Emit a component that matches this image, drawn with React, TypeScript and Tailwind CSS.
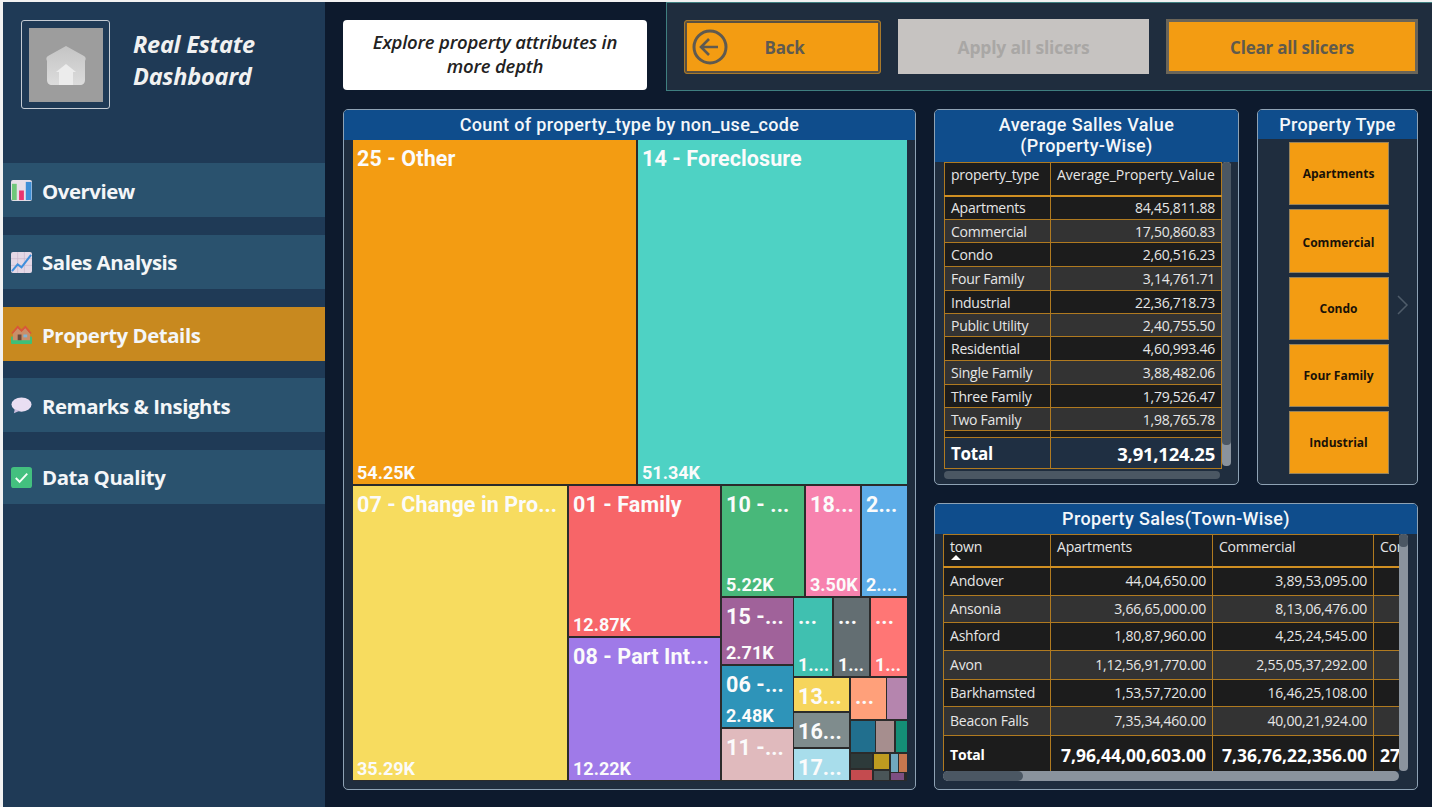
import type { ReactNode } from "react";

const UI = "font-['Open_Sans','Noto_Sans',sans-serif]";
const TITLE = "font-['Roboto','Noto_Sans',sans-serif]";

function ChartEmoji() {
  return (
    <svg viewBox="0 0 22 22" className="h-[21px] w-[21px]">
      <rect width="22" height="22" rx="2" fill="#e6dfe8" />
      <rect x="1" y="4" width="5" height="17" fill="#6fc77a" />
      <rect x="8.5" y="11" width="5" height="10" fill="#e8336f" />
      <rect x="15.5" y="2" width="6" height="19" fill="#3d8fd6" />
    </svg>
  );
}

function TrendEmoji() {
  return (
    <svg viewBox="0 0 22 22" className="h-[21px] w-[21px]">
      <rect width="22" height="22" rx="2" fill="#e4d8e6" />
      <path d="M7 0v22M14 0v22M0 7h22M0 14h22" stroke="#c9b6cc" strokeWidth="0.7" />
      <path d="M1 20l6-7 4 3 10-13" fill="none" stroke="#3f8fdc" strokeWidth="2.2" />
    </svg>
  );
}

function HouseEmoji() {
  return (
    <svg viewBox="0 0 22 22" className="h-[21px] w-[21px]">
      <rect x="0" y="13" width="22" height="8" rx="1" fill="#3fbf78" />
      <path d="M2 10l5-6 4 4 4-4 5 6v7H2z" fill="#c98f6a" />
      <path d="M1 10l6-7 4 4 4-4 6 7" fill="none" stroke="#d9553a" strokeWidth="1.8" />
      <rect x="7" y="11" width="4" height="6" fill="#6b4a3a" />
      <rect x="13" y="11" width="4" height="3" fill="#7fb6d6" />
    </svg>
  );
}

function BubbleEmoji() {
  return (
    <svg viewBox="0 0 22 22" className="h-[21px] w-[21px]">
      <ellipse cx="11" cy="10" rx="10.500" ry="7.500" fill="#e9def2" />
      <path d="M4 15l-1 4 6-2.500z" fill="#cdbfe0" />
    </svg>
  );
}

function CheckEmoji() {
  return (
    <svg viewBox="0 0 22 22" className="h-[21px] w-[21px]">
      <rect width="22" height="22" rx="3" fill="#43c07f" />
      <path d="M5 11.500l4 4 8-8.500" fill="none" stroke="#f4fff8" strokeWidth="2" />
    </svg>
  );
}

function LogoHouse() {
  return (
    <svg viewBox="0 0 74 74" className="h-[74px] w-[74px]">
      <defs>
        <linearGradient id="roof" x1="0" y1="0" x2="0" y2="1">
          <stop offset="0" stopColor="#c4c4c4" />
          <stop offset="1" stopColor="#dcdcdc" />
        </linearGradient>
      </defs>
      <rect width="74" height="74" fill="#9d9d9d" />
      <path
        d="M37 18l18 10c2 1 2 3 1 5v19c0 3-2 5-5 5H23c-3 0-5-2-5-5V33c-1-2-1-4 1-5z"
        fill="url(#roof)"
      />
      <path d="M37 36l10 8h-3v13H30V44h-3z" fill="#ececec" />
    </svg>
  );
}

const NAV = [
  { label: "Overview", icon: <ChartEmoji />, top: "mt-[54px]", pad: "pt-[3px]" },
  { label: "Sales Analysis", icon: <TrendEmoji />, top: "mt-[18px]", pad: "pt-[1px]" },
  { label: "Property Details", icon: <HouseEmoji />, top: "mt-[18px]", pad: "pt-[3px]", active: true },
  { label: "Remarks & Insights", icon: <BubbleEmoji />, top: "mt-[17px]", pad: "pt-[3px]" },
  { label: "Data Quality", icon: <CheckEmoji />, top: "mt-[18px]", pad: "pt-[1px]" },
];

function Sidebar() {
  return (
    <aside className="flex h-full w-[322px] shrink-0 flex-col bg-[#1f3a56]">
      <div className="flex h-[107px] items-start pl-[18px] pt-[18px]">
        <div className="flex h-[89px] w-[89px] shrink-0 items-center justify-center rounded-[3px] border border-[#c5ccd4]">
          <LogoHouse />
        </div>
        <div
          className={`${UI} ml-[23px] mt-[8px] text-[23.500px] font-bold italic leading-[32px] tracking-[-0.25px] text-[#f1f1f1]`}
        >
          Real Estate
          <br />
          Dashboard
        </div>
      </div>
      {NAV.map((item) => (
        <div
          key={item.label}
          className={`${item.top} flex h-[54px] items-center pl-[8px] ${
            item.active ? "bg-[#c8891f]" : "bg-[#2a526e]"
          }`}
        >
          {item.icon}
          <span className={`${UI} ${item.pad} ml-[10px] text-[20.400px] font-bold tracking-[-0.45px] text-[#f4f6f8]`}>
            {item.label}
          </span>
        </div>
      ))}
    </aside>
  );
}

function Panel({
  title,
  headerClass,
  className,
  children,
}: {
  title: ReactNode;
  headerClass: string;
  className: string;
  children: ReactNode;
}) {
  return (
    <section
      className={`${className} flex flex-col overflow-hidden rounded-[5px] border border-[#8ea2b4] bg-[#1f2d3e]`}
    >
      <h2
        className={`${TITLE} ${headerClass} shrink-0 bg-[#0f4d8c] text-center text-[18px] font-medium tracking-[0.35px] text-[#f4f7fa]`}
      >
        {title}
      </h2>
      {children}
    </section>
  );
}

function Cell({
  className,
  label,
  value,
}: {
  className: string;
  label?: string;
  value?: string;
}) {
  return (
    <div
      className={`${className} ${TITLE} flex flex-col justify-between overflow-hidden whitespace-nowrap pl-[4px] font-bold text-[#fbfbfb]`}
    >
      <span className="mt-[7px] text-[21.500px] leading-[24px] tracking-[0.1px]">{label}</span>
      {value && <span className="mb-[2px] text-[18px] leading-[18px]">{value}</span>}
    </div>
  );
}

function Treemap() {
  return (
    <div className="ml-[9px] flex h-[641px] w-[554px] flex-col gap-[2px] border-b border-[#2b2b2b] bg-[#2b2b2b]">
      <div className="flex h-[344px] gap-[2px]">
        <Cell className="w-[283px] bg-[#f39c12]" label="25 - Other" value="54.25K" />
        <Cell className="w-[269px] bg-[#4ed2c4]" label="14 - Foreclosure" value="51.34K" />
      </div>
      <div className="flex h-[294px] gap-[2px]">
        <Cell className="w-[214px] bg-[#f7dc5f]" label="07 - Change in Pro..." value="35.29K" />
        <div className="flex w-[151px] flex-col gap-[2px]">
          <Cell className="h-[150px] bg-[#f76568]" label="01 - Family" value="12.87K" />
          <Cell className="h-[142px] bg-[#9f7ae8]" label="08 - Part Int..." value="12.22K" />
        </div>
        <div className="flex w-[185px] flex-col gap-[2px]">
          <div className="flex h-[110px] gap-[2px]">
            <Cell className="w-[82px] bg-[#48b87a]" label="10 - ..." value="5.22K" />
            <Cell className="w-[54px] bg-[#f782ae]" label="18..." value="3.50K" />
            <Cell className="w-[45px] bg-[#5dade8]" label="2..." value="2...." />
          </div>
          <div className="flex h-[182px] gap-px">
            <div className="flex w-[71px] flex-col gap-[2px]">
              <Cell className="h-[66px] bg-[#a0629a]" label="15 -..." value="2.71K" />
              <Cell className="h-[61px] bg-[#2e94b9]" label="06 -..." value="2.48K" />
              <Cell className="h-[51px] bg-[#e0babd]" label="11 -..." />
            </div>
            <div className="flex w-[113px] flex-col gap-[2px]">
              <div className="flex h-[78px] gap-[2px]">
                <Cell className="w-[38px] bg-[#40c0b0]" label="..." value="1...." />
                <Cell className="w-[35px] bg-[#636e72]" label="..." value="1..." />
                <Cell className="w-[36px] bg-[#ff7675]" label="..." value="1..." />
              </div>
              <div className="flex h-[102px] gap-[2px]">
                <div className="flex w-[55px] flex-col gap-[2px]">
                  <Cell className="h-[33px] bg-[#f6d55c]" label="13..." />
                  <Cell className="h-[34px] bg-[#7f8c8d]" label="16..." />
                  <Cell className="h-[31px] bg-[#a8ddeb]" label="17..." />
                </div>
                <div className="flex w-[56px] flex-col gap-[2px]">
                  <div className="flex h-[41px] gap-px">
                    <Cell className="w-[35px] bg-[#ffa07a]" label="..." />
                    <div className="w-[20px] bg-[#b585ae]" />
                  </div>
                  <div className="flex h-[31px]">
                    <div className="w-[24px] bg-[#216f8e]" />
                    <div className="ml-px w-[18px] bg-[#a68e8e]" />
                    <div className="ml-[2px] w-[11px] bg-[#148f77]" />
                  </div>
                  <div className="flex h-[26px] gap-[2px]">
                    <div className="flex w-[21px] flex-col gap-[2px]">
                      <div className="h-[14px] bg-[#2d3a3a]" />
                      <div className="h-[10px] bg-[#c44b4f]" />
                    </div>
                    <div className="flex w-[15px] flex-col gap-[2px]">
                      <div className="h-[15px] bg-[#bf9b20]" />
                      <div className="h-[9px] bg-[#4a5558]" />
                    </div>
                    <div className="flex w-[16px] flex-col gap-px">
                      <div className="flex h-[18px] gap-px">
                        <div className="w-[7px] bg-[#70a8be]" />
                        <div className="w-[8px] bg-[#c7774e]" />
                      </div>
                      <div className="h-[7px] w-[13px] bg-[#7d4f82]" />
                    </div>
                  </div>
                </div>
              </div>
            </div>
          </div>
        </div>
      </div>
    </div>
  );
}

const AVG_ROWS: [string, string, number][] = [
  ["Apartments", "84,45,811.88", 24],
  ["Commercial", "17,50,860.83", 23],
  ["Condo", "2,60,516.23", 24],
  ["Four Family", "3,14,761.71", 24],
  ["Industrial", "22,36,718.73", 23],
  ["Public Utility", "2,40,755.50", 23],
  ["Residential", "4,60,993.46", 24],
  ["Single Family", "3,88,482.06", 24],
  ["Three Family", "1,79,526.47", 23],
  ["Two Family", "1,98,765.78", 23],
];

const TOWN_ROWS: [string, string, string, number][] = [
  ["Andover", "44,04,650.00", "3,89,53,095.00", 29],
  ["Ansonia", "3,66,65,000.00", "8,13,06,476.00", 27],
  ["Ashford", "1,80,87,960.00", "4,25,24,545.00", 28],
  ["Avon", "1,12,56,91,770.00", "2,55,05,37,292.00", 29],
  ["Barkhamsted", "1,53,57,720.00", "16,46,25,108.00", 27],
  ["Beacon Falls", "7,35,34,460.00", "40,00,21,924.00", 29],
];

const cellBorder = "border border-[#b07a20]";
const headCell = `${cellBorder} border-b-2 border-b-[#d08f22] px-[6px] text-left font-normal`;
const stripe = (i: number) => (i % 2 === 0 ? "bg-[#1c1c1c]" : "bg-[#333333]");

function AverageTable() {
  return (
    <div className="ml-[9px] flex flex-col">
      <div className="flex">
        <table className={`${UI} w-[277px] table-fixed border-collapse text-[14px] tracking-[-0.25px] text-[#e6e6e6]`}>
          <colgroup>
            <col className="w-[106px]" />
            <col className="w-[171px]" />
          </colgroup>
          <thead>
            <tr className="h-[33px] bg-[#1c1c1c]">
              <th className={`${headCell} pb-[8px]`}>property_type</th>
              <th className={`${headCell} pb-[8px] tracking-[0]`}>Average_Property_Value</th>
            </tr>
          </thead>
          <tbody>
            {AVG_ROWS.map(([name, value, h], i) => (
              <tr key={name} className={stripe(i)} style={{ height: h }}>
                <td className={`${cellBorder} px-[6px] py-0`}>{name}</td>
                <td className={`${cellBorder} px-[6px] py-0 text-right`}>{value}</td>
              </tr>
            ))}
            <tr className="h-[7px] bg-[#1c1c1c]">
              <td className={cellBorder} />
              <td className={cellBorder} />
            </tr>
            <tr className="h-[29px] bg-[#1f2f42] text-[18.500px] font-bold text-white">
              <td className={`${cellBorder} px-[6px] py-0 pt-[2px] text-[17px]`}>Total</td>
              <td className={`${cellBorder} px-[6px] py-0 pt-[2px] text-right`}>3,91,124.25</td>
            </tr>
          </tbody>
        </table>
        <div className="flex h-[304px] w-[9px] flex-col overflow-hidden rounded-[4px] bg-[#8a939d]">
          <div className="h-[283px] rounded-[4px] bg-[#4b5763]" />
        </div>
      </div>
      <div className="mt-[2px] h-[8px] w-[276px] rounded-[4px] bg-[#4b5763]" />
    </div>
  );
}

function TownTable() {
  return (
    <div className="ml-[8px] flex flex-col">
      <div className="flex">
        <div className="h-[237px] w-[456px] overflow-hidden">
          <table className={`${UI} w-[550px] table-fixed border-collapse text-[14px] tracking-[-0.2px] text-[#e6e6e6]`}>
            <colgroup>
              <col className="w-[107px]" />
              <col className="w-[162px]" />
              <col className="w-[161px]" />
              <col className="w-[120px]" />
            </colgroup>
            <thead>
              <tr className="h-[32px] bg-[#1c1c1c]">
                <th className={`${headCell} pt-[3px] align-top leading-[17px]`}>
                  town
                  <div className="ml-[1px] h-0 w-0 border-x-[5px] border-b-[5px] border-x-transparent border-b-white" />
                </th>
                <th className={`${headCell} pt-[3px] align-top leading-[17px]`}>Apartments</th>
                <th className={`${headCell} pt-[3px] align-top leading-[17px]`}>Commercial</th>
                <th className={`${headCell} pt-[3px] align-top leading-[17px]`}>Condo</th>
              </tr>
            </thead>
            <tbody>
              {TOWN_ROWS.map(([town, apartments, commercial, h], i) => (
                <tr key={town} className={stripe(i)} style={{ height: h }}>
                  <td className={`${cellBorder} px-[6px] pb-[2px]`}>{town}</td>
                  <td className={`${cellBorder} px-[6px] pb-[2px] text-right`}>{apartments}</td>
                  <td className={`${cellBorder} px-[6px] pb-[2px] text-right`}>{commercial}</td>
                  <td className={cellBorder} />
                </tr>
              ))}
              <tr className="h-[37px] bg-[#1c1c1c] font-bold text-white">
                <td className={`${cellBorder} px-[6px] py-0 text-[14px]`}>Total</td>
                <td className={`${cellBorder} whitespace-nowrap px-[6px] py-0 pt-[3px] text-right text-[17.500px] tracking-[0]`}>
                  7,96,44,00,603.00
                </td>
                <td className={`${cellBorder} whitespace-nowrap px-[6px] py-0 pt-[3px] text-right text-[17.500px] tracking-[0]`}>
                  7,36,76,22,356.00
                </td>
                <td className={`${cellBorder} whitespace-nowrap px-[6px] py-0 pt-[3px] text-left text-[17.500px] tracking-[0]`}>
                  27
                </td>
              </tr>
            </tbody>
          </table>
        </div>
        <div className="h-[237px] w-[9px] overflow-hidden rounded-[4px] bg-[#8a939d]">
          <div className="h-[13px] rounded-[4px] bg-[#4b5763]" />
        </div>
      </div>
      <div className="h-[10px] w-[456px] overflow-hidden rounded-[5px] bg-[#8a939d]">
        <div className="h-full w-[80px] rounded-[5px] bg-[#4b5763]" />
      </div>
    </div>
  );
}

const SLICERS = [
  { label: "Apartments", h: "h-[63px]", pad: "pt-[1px]" },
  { label: "Commercial", h: "h-[64px]", pad: "pt-[3px]" },
  { label: "Condo", h: "h-[63px]", pad: "pt-[1px]" },
  { label: "Four Family", h: "h-[63px]", pad: "pt-[1px]" },
  { label: "Industrial", h: "h-[63px]", pad: "pt-[1px]" },
];

function Toolbar() {
  return (
    <div className="ml-[19px] flex h-[89px] flex-1 items-start border border-r-0 border-[#3f7f80] bg-[#1f2d3e] pl-[17px] pt-[16px]">
      <button
        type="button"
        className={`${UI} relative mt-px flex h-[54px] w-[197px] items-center justify-center rounded-[3px] border border-[#a8792a] bg-[#f39c12] pl-[4px] pt-[2px] text-[17px] font-bold tracking-[-0.2px] text-[#5f5a50] outline-2 -outline-offset-3 outline-[#5a5040]`}
      >
        <svg viewBox="0 0 36 36" className="absolute left-[7px] top-[8px] h-[36px] w-[36px]">
          <circle cx="18" cy="18" r="16" fill="none" stroke="#5f5a50" strokeWidth="3" />
          <path d="M26 18H9M17 10l-8 8 8 8" fill="none" stroke="#5f5a50" strokeWidth="2.600" />
        </svg>
        Back
      </button>
      <button
        type="button"
        className={`${UI} ml-[17px] flex h-[55px] w-[251px] items-center justify-center bg-[#c6c3c1] pt-[2px] text-[17.500px] font-bold tracking-[-0.2px] text-[#a9a7a5]`}
      >
        Apply all slicers
      </button>
      <button
        type="button"
        className={`${UI} ml-[17px] flex h-[55px] w-[252px] items-center justify-center border-[3px] border-[#6b6558] bg-[#f39c12] pt-[2px] text-[17px] font-bold tracking-[-0.2px] text-[#5f5a4c]`}
      >
        Clear all slicers
      </button>
    </div>
  );
}

export default function App() {
  return (
    <div className="h-[807px] w-[1432px] overflow-hidden border-l-[3px] border-t-2 border-[#f2f2f2] bg-[#0d1a2d]">
      <div className="flex h-full">
        <Sidebar />
        <main className="flex min-w-0 flex-1 flex-col">
          <div className="flex items-start">
            <div
              className={`${UI} ml-[18px] mt-[18px] flex h-[70px] w-[304px] items-center justify-center rounded-[4px] bg-white pb-[2px] text-center text-[18.500px] font-semibold italic leading-[24px] tracking-[-0.2px] text-[#222]`}
            >
              Explore property attributes in
              <br />
              more depth
            </div>
            <Toolbar />
          </div>
          <div className="ml-[18px] mt-[18px] flex gap-[18px]">
            <Panel title="Count of property_type by non_use_code" headerClass="h-[30px] leading-[29px]" className="h-[681px] w-[573px]">
              <Treemap />
            </Panel>
            <div className="flex w-[484px] flex-col gap-[18px]">
              <div className="flex gap-[18px]">
                <Panel
                  title={
                    <>
                      Average Salles Value
                      <br />
                      (Property-Wise)
                    </>
                  }
                  headerClass="h-[52px] pt-[4px] leading-[21px]"
                  className="h-[376px] w-[305px]"
                >
                  <AverageTable />
                </Panel>
                <Panel title="Property Type" headerClass="h-[29px] leading-[29px]" className="h-[376px] w-[161px]">
                  <div className="relative flex flex-col items-center gap-[4px] pl-[2px] pt-[3px]">
                    {SLICERS.map((s) => (
                      <div
                        key={s.label}
                        className={`${s.h} ${s.pad} ${UI} flex w-[100px] items-center justify-center border-[1.500px] border-[#97835c] bg-[#f39c12] text-[12px] font-bold text-[#1a1208]`}
                      >
                        {s.label}
                      </div>
                    ))}
                    <svg viewBox="0 0 12 20" className="absolute left-[139px] top-[156px] h-[20px] w-[12px]">
                      <path d="M1 1l9 9-9 9" fill="none" stroke="#4f5c6a" strokeWidth="1.500" />
                    </svg>
                  </div>
                </Panel>
              </div>
              <Panel title="Property Sales(Town-Wise)" headerClass="h-[30px] leading-[30px]" className="h-[287px] w-[484px]">
                <TownTable />
              </Panel>
            </div>
          </div>
        </main>
      </div>
    </div>
  );
}
